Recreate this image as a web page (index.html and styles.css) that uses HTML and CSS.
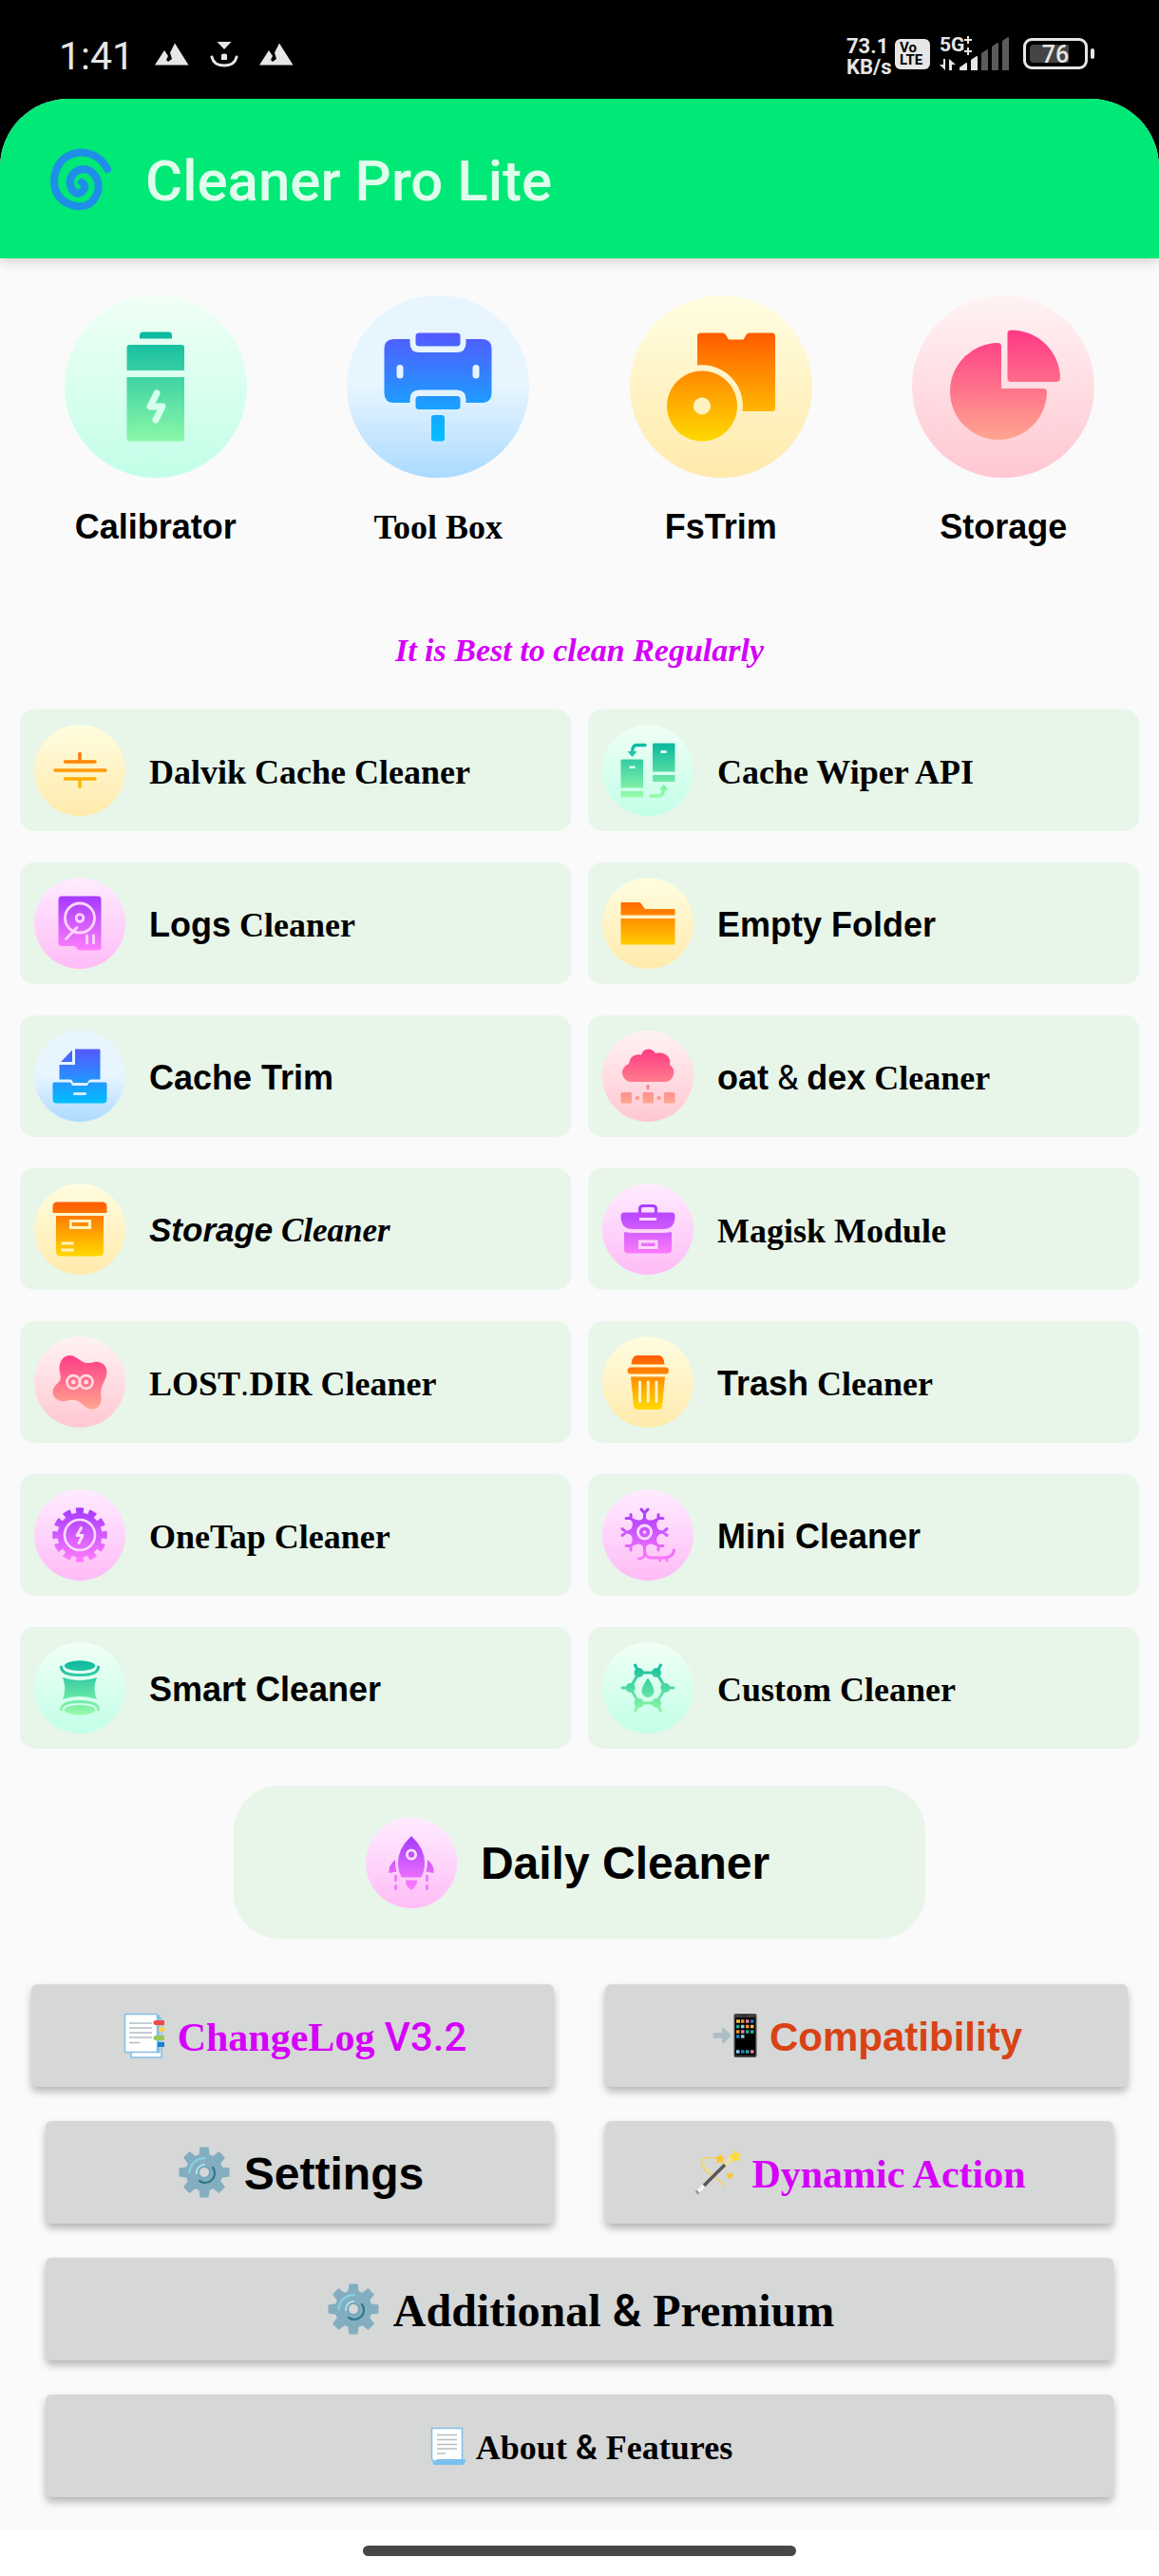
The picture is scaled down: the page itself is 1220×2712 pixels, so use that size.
FILE: index.html
```html
<!DOCTYPE html>
<html lang="en">
<head>
<meta charset="utf-8">
<meta name="viewport" content="width=device-width, initial-scale=1">
<title>Cleaner Pro Lite</title>
<link rel="stylesheet" href="styles.css">
</head>
<body>
<svg class="defs" width="0" height="0" aria-hidden="true">
  <defs>
    <linearGradient id="g-green" gradientUnits="userSpaceOnUse" x1="0" y1="19" x2="0" y2="77"><stop offset="0" stop-color="#08b8a0"/><stop offset="1" stop-color="#98fca8"/></linearGradient>
    <linearGradient id="g-blue" gradientUnits="userSpaceOnUse" x1="0" y1="19" x2="0" y2="77"><stop offset="0" stop-color="#5558ff"/><stop offset="1" stop-color="#00c0ff"/></linearGradient>
    <linearGradient id="g-gold" gradientUnits="userSpaceOnUse" x1="0" y1="19" x2="0" y2="77"><stop offset="0" stop-color="#ff5a00"/><stop offset="1" stop-color="#ffda00"/></linearGradient>
    <linearGradient id="g-rose" gradientUnits="userSpaceOnUse" x1="0" y1="19" x2="0" y2="77"><stop offset="0" stop-color="#fe3a86"/><stop offset="1" stop-color="#ffa78f"/></linearGradient>
    <linearGradient id="g-violet" gradientUnits="userSpaceOnUse" x1="0" y1="19" x2="0" y2="77"><stop offset="0" stop-color="#a438ff"/><stop offset="1" stop-color="#ff7efc"/></linearGradient>
    <linearGradient id="g-green-l" gradientUnits="userSpaceOnUse" x1="0" y1="38" x2="0" y2="154"><stop offset="0" stop-color="#08b8a0"/><stop offset="1" stop-color="#8cf8a8"/></linearGradient>
    <linearGradient id="g-blue-l" gradientUnits="userSpaceOnUse" x1="0" y1="38" x2="0" y2="154"><stop offset="0" stop-color="#5558ff"/><stop offset="1" stop-color="#00c0ff"/></linearGradient>
    <linearGradient id="g-gold-l" gradientUnits="userSpaceOnUse" x1="0" y1="38" x2="0" y2="154"><stop offset="0" stop-color="#ff5a00"/><stop offset="1" stop-color="#ffda00"/></linearGradient>
    <linearGradient id="g-rose-l" gradientUnits="userSpaceOnUse" x1="0" y1="38" x2="0" y2="154"><stop offset="0" stop-color="#fe3a86"/><stop offset="1" stop-color="#ffa78f"/></linearGradient>
    <symbol id="gear" viewBox="0 0 60 60">
      <g fill="#82aec0">
        <circle cx="30" cy="30" r="19.500"/>
        <path id="tooth" d="M24 14l1.500-10.500h9L36 14z"/>
        <use href="#tooth" transform="rotate(45 30 30)"/><use href="#tooth" transform="rotate(90 30 30)"/>
        <use href="#tooth" transform="rotate(135 30 30)"/><use href="#tooth" transform="rotate(180 30 30)"/>
        <use href="#tooth" transform="rotate(225 30 30)"/><use href="#tooth" transform="rotate(270 30 30)"/>
        <use href="#tooth" transform="rotate(315 30 30)"/>
      </g>
      <path d="M14.500 30A16 16 0 0 1 31 15" fill="none" stroke="#84cfe0" stroke-width="2.500" stroke-linecap="round"/>
      <path d="M22 31a8.500 8.500 0 0 1 8-9" fill="none" stroke="#b4e6f0" stroke-width="2" stroke-linecap="round"/>
      <path d="M39 25A10 10 0 0 1 25 39" fill="none" stroke="#2f7889" stroke-width="2.200" stroke-linecap="round"/>
      <circle cx="30" cy="30" r="7" fill="#74a7bb"/><circle cx="30" cy="30" r="5" fill="#d6d7d7"/>
    </symbol>
  </defs>
</svg>

<div class="status">
  <div class="status-left">
    <span class="clock">1:41</span>
    <svg width="36" height="24" viewBox="0 0 36 24"><path d="M0 23.500L10 8l4 6-2 4 2 2 4-3-2-6.500L21 .5l14.500 23z"/></svg>
    <svg width="30" height="28" viewBox="0 0 30 28"><path d="M7.500 1h15L15 9z"/><path d="M12 20v-5q0-1.500 3-1.500t3 1.500v5z"/><path d="M2 17q2 9 13 9t13-9" fill="none" stroke="#e6e6e6" stroke-width="3" stroke-linecap="round"/></svg>
    <svg width="36" height="24" viewBox="0 0 36 24"><path d="M0 23.500L10 8l4 6-2 4 2 2 4-3-2-6.500L21 .5l14.500 23z"/></svg>
  </div>
  <div class="status-right">
    <span class="speed"><span>73.1</span><span>KB/s</span></span>
    <span class="volte"><span>Vo</span><span>LTE</span></span>
    <span class="signal">
      <span class="net">5G</span>
      <svg width="74" height="36" viewBox="0 0 74 36">
        <path d="M30 0v8M26 4h8M30 12v8M26 16h8" stroke="#e6e6e6" stroke-width="2"/>
        <path d="M4 24h2v12L0 30h4zM10 36V24l7 6h-4v6z"/>
        <path d="M21 36v-3l7-5q1 0 1 1v7zM33 36V25l6-4q1 0 1 1v14z"/>
        <path d="M44 36V18l6-4q1 0 1 1v21zM55 36V11l6-4q1 0 1 1v28zM66 36V5l6-4q1 0 1 1v34z" fill="#5b5b5b"/>
      </svg>
    </span>
    <span class="battery"><span>76</span></span>
  </div>
</div>

<div class="frame">
<header class="appbar">
  <svg width="68" height="70" viewBox="0 0 68 70" aria-hidden="true"><path d="M35 36Q41 40 36 45.500Q30 50 25 44Q20 35 26 27Q34 19 44 24Q55 32 52 46Q46 63 29 61Q12 58 7 43Q3 25 15 12Q28 1 44 6Q56 10 62 22" fill="none" stroke="#1e8fe8" stroke-width="8" stroke-linecap="round" stroke-linejoin="round"/></svg>
  <h1>Cleaner Pro Lite</h1>
</header>

<main>
  <nav class="shortcuts">
    <button type="button" class="shortcut"><span class="badge large green"><svg viewBox="0 0 192 192" fill="url(#g-green-l)"><path d="M79 45.500V42q0-3.500 3.500-3.500h27q3.500 0 3.500 3.500v3.500zM65.500 79V55q0-3 3-3H123q3 0 3 3v24zM65.500 86H126v64q0 3.500-3 3.500H68.500q-3 0-3-3.500z"/><path d="M97 103l-7 14h13l-7 14" fill="none" stroke="#d5ffec" stroke-width="7" stroke-linecap="round" stroke-linejoin="round"/></svg></span><span class="caption sans">Calibrator</span></button>
    <button type="button" class="shortcut"><span class="badge large blue"><svg viewBox="0 0 192 192" fill="url(#g-blue-l)"><path d="M50 46h16.500v4q0 10 10 10h39q10 0 10-10v-4H142q10.500 0 10.500 10.500V103q0 10-10.500 10h-16.500v-3.500q0-10-10-10h-39q-10 0-10 10v3.500H50q-10.500 0-10.500-10V56.500Q39.500 46 50 46z"/><rect x="72.500" y="39.500" width="47" height="14" rx="3.500"/><rect x="72.500" y="106" width="47" height="14" rx="3.500"/><rect x="89" y="126" width="14" height="27.500" rx="3"/><g fill="#e7f5ff"><rect x="52.500" y="73" width="7" height="14.500" rx="3.500"/><rect x="132.500" y="73" width="7" height="14.500" rx="3.500"/></g></svg></span><span class="caption serif">Tool Box</span></button>
    <button type="button" class="shortcut"><span class="badge large gold"><svg viewBox="0 0 192 192" fill="url(#g-gold-l)"><path d="M71 43q0-3.500 3.500-3.500H98q2 0 3 2l3 5h15.500l3-5q1-2 3-2h24q3.500 0 3.500 3.500v75.500q0 3.500-3.500 3.500h-31A43 43 0 0 0 71 73.500z"/><path fill-rule="evenodd" d="M76 79.500a37 37 0 1 0 .1 0zM76 107.500a9 9 0 1 1-.1 0z"/></svg></span><span class="caption sans">FsTrim</span></button>
    <button type="button" class="shortcut"><span class="badge large rose"><svg viewBox="0 0 192 192" fill="url(#g-rose-l)"><path d="M94 54q0-4-4-4A51 51 0 1 0 142 102q0-4-4-4H94z"/><path d="M100.500 40q0-3.500 4-3.500A51.500 51.500 0 0 1 156 87q0 4-4 4h-48q-3.500 0-3.500-4z"/></svg></span><span class="caption sans">Storage</span></button>
  </nav>

  <p class="tagline">It is Best to clean Regularly</p>

  <section class="cards">
    <button type="button" class="card"><span class="badge gold"><svg viewBox="0 0 96 96" fill="none" stroke="url(#g-gold)" stroke-width="3.500" stroke-linecap="round"><path d="M48 30.500V39M32.500 39.010L64 39M22 48.010L75 48M32.500 57.010L64 57M48 57v8.500"/></svg></span><span class="label serif">Dalvik Cache Cleaner</span></button>
    <button type="button" class="card"><span class="badge green"><svg viewBox="0 0 96 96" fill="url(#g-green)"><path fill-rule="evenodd" d="M20.500 36.500H42q1 0 1 1v29H19.500v-29q0-1 1-1zM28.500 43.500V46h6v-2.500zM54 19.500h21.500q1 0 1 1v29H53v-29q0-1 1-1zM61.500 27v3h6v-3z"/><path d="M19.500 70H43v5.500q0 1-1 1H20.500q-1 0-1-1zM53 53h23.500v6q0 1-1 1H54q-1 0-1-1zM26.500 28h10l-5 6zM60 68.500h9.500L64.500 63z"/><path d="M45 21.500H36q-4.500 0-4.500 8M51 75h8.500q5 0 5-8" fill="none" stroke="url(#g-green)" stroke-width="3.500" stroke-linecap="round"/></svg></span><span class="label serif">Cache Wiper API</span></button>

    <button type="button" class="card"><span class="badge violet"><svg viewBox="0 0 96 96"><path fill="url(#g-violet)" d="M29 19.500h38q3.500 0 3.500 3.500v50q0 3.500-3.500 3.500H47l-4.500-4.500H29q-3.500 0-3.500-3.500V23q0-3.500 3.500-3.500z"/><g fill="none" stroke="#ffd6fb" stroke-width="2.800" stroke-linecap="round"><circle cx="48" cy="42.500" r="15.500"/><circle cx="48" cy="42.500" r="3.800"/><path d="M45 52.500L33.500 64.500M55.500 61v8M62.500 61v8"/></g></svg></span><span class="label"><span class="sans">Logs</span> <span class="serif">Cleaner</span></span></button>
    <button type="button" class="card"><span class="badge gold"><svg viewBox="0 0 96 96" fill="url(#g-gold)"><path d="M20.500 26H39q1 0 1.500 1l4.500 6h30.500q1 0 1 1v5.500h-57V27q0-1 1-1zM19.500 43h57v26.500q0 1-1 1h-55q-1 0-1-1z"/></svg></span><span class="label sans">Empty Folder</span></button>

    <button type="button" class="card"><span class="badge blue"><svg viewBox="0 0 96 96" fill="url(#g-blue)"><path d="M40 20.500V33H28zM43 19.500h25.500q1 0 1 1v31H59q-1.500 0-3 3.500H41q-1-3.500-3-3.500H26.500V36H43zM21 54.500h16q2 0 3 3.500h16q1-3.500 3-3.500h16q1.500 0 1.500 1.500v16q0 4.500-4 4.500h-49q-4 0-4-4.500V56q0-1.500 1.500-1.500z"/><path d="M42.500 66.500h11" stroke="#d4ecff" stroke-width="3.200" stroke-linecap="round"/></svg></span><span class="label sans">Cache Trim</span></button>
    <button type="button" class="card"><span class="badge rose"><svg viewBox="0 0 96 96" fill="url(#g-rose)"><path d="M29 54A9.800 9.800 0 0 1 28 35Q29 26.500 36 25.500 39 25 41 25.500 43 19.500 48.500 19.500 53 19.500 56 24 63 22 68 26 72.500 30 71 36A10 10 0 0 1 67 54zM46.500 57h3v5h-3z"/><rect x="19.500" y="65" width="11.500" height="11.500" rx="1.500"/><rect x="42.500" y="65" width="11.500" height="11.500" rx="1.500"/><rect x="65" y="65" width="11.500" height="11.500" rx="1.500"/><circle cx="36.800" cy="71" r="2.300"/><circle cx="59.500" cy="71" r="2.300"/></svg></span><span class="label"><span class="sans">oat</span> <span class="roboto">&amp;</span> <span class="sans">dex</span> <span class="serif">Cleaner</span></span></button>

    <button type="button" class="card"><span class="badge gold"><svg viewBox="0 0 96 96"><path fill="url(#g-gold)" d="M24.500 19.500h47q5 0 5 5V30q0 1-1 1h-55q-1 0-1-1v-5.500q0-5 5-5zM23 34h50v37.500q0 5-5 5H28q-5 0-5-5z"/><g fill="none" stroke="#fff3bf" stroke-width="3"><path d="M38.500 39.500h20v7h-20zM28.500 63h13M28.500 70h13"/></g></svg></span><span class="label italic"><span class="sans">Storage</span> <span class="serif">Cleaner</span></span></button>
    <button type="button" class="card"><span class="badge violet"><svg viewBox="0 0 96 96"><path fill="url(#g-violet)" d="M23 30.500h50q3.500 0 3.500 4 0 14-13.500 13.500H33Q19.500 48.500 19.500 34.500q0-4 3.500-4zM23 51q5 1 10 1h30q5 0 10-1v18.500q0 4-4 4H27q-4 0-4-4z"/><path d="M39.500 31v-4q0-3.500 3.500-3.500h10q3.500 0 3.500 3.500v4" fill="none" stroke="url(#g-violet)" stroke-width="3.200"/><path d="M39 37.500h18M39.500 61h17.500v6.500H39.500z" fill="none" stroke="#ffd6fb" stroke-width="3"/></svg></span><span class="label serif">Magisk Module</span></button>

    <button type="button" class="card"><span class="badge rose"><svg viewBox="0 0 96 96"><path fill="url(#g-rose)" d="M27 38C25 30 29 20 37 20C45 20 49 28 56 28C62 28 63 26 68 27C76 29 78 36 75.500 43C72 51 69 56 70.500 64C71 70 68 76.500 61 76.500C53 76.500 50 68 43 67C37 66 34 69 28 68C20 66 17 58 22 52C27 47 29 46 27 38z"/><g fill="none" stroke="#ffdce0" stroke-width="2.600"><circle cx="41.300" cy="48" r="6.900"/><circle cx="54.700" cy="48" r="6.900"/></g><g fill="#ffdce0"><circle cx="41.300" cy="48" r="2.400"/><circle cx="54.700" cy="48" r="2.400"/></g></svg></span><span class="label"><span class="serif">LOST</span><span class="roboto">.</span><span class="serif">DIR Cleaner</span></span></button>
    <button type="button" class="card"><span class="badge gold"><svg viewBox="0 0 96 96"><path fill="url(#g-gold)" d="M30.500 29.500Q31 20 37 20h22q6 0 6.500 9.500zM30 42.500h36L63 73q-.5 4-4.500 4h-21q-4 0-4.500-4z"/><rect x="26.500" y="32.500" width="43.500" height="7" rx="3.500" fill="url(#g-gold)"/><path d="M39.500 48v20.500M48.200 48v20.500M57 48v20.500" stroke="#fff3bf" stroke-width="3" stroke-linecap="round"/></svg></span><span class="label"><span class="sans">Trash</span> <span class="serif">Cleaner</span></span></button>

    <button type="button" class="card"><span class="badge violet"><svg viewBox="0 0 96 96"><circle cx="48" cy="48" r="23.500" fill="url(#g-violet)"/><circle cx="48" cy="48" r="25.500" pathLength="24" fill="none" stroke="url(#g-violet)" stroke-width="6.500" stroke-dasharray="1.200 .8" stroke-dashoffset=".6"/><circle cx="48" cy="48" r="16" fill="none" stroke="#ffdcfc" stroke-width="2.600"/><path d="M49.500 40.500l-4.500 8h6l-4 8" fill="none" stroke="#ffdcfc" stroke-width="2.800" stroke-linecap="round" stroke-linejoin="round"/></svg></span><span class="label serif">OneTap Cleaner</span></button>
    <button type="button" class="card"><span class="badge violet"><svg viewBox="0 0 96 96"><path d="M44.500 27q2 6 6 5.500 4 0 6-2l2 2q-2 3-1 6.500 1 4 5 4.500v3q-4 1-5 4.500-1 4 1 6.500l-2 2q-3-2-6-2-4 0-6 7-2-7-6-7-3 0-6 2l-2-2q2-3 1-6.500-1-4-5-4.500v-3q4-1 5-4.500 1-4-1-6.500l2-2q3 2 6 2 4 0 6-5.500z" fill="url(#g-violet)"/><g fill="none" stroke="url(#g-violet)" stroke-width="3" stroke-linecap="round" stroke-linejoin="round"><path d="M44.500 33v-8M41 21l3.500 4 3.500-4M44.500 57v12q-1 4-6 4M33 45h-8M21 41.500l4 3.500-4 3.500M56 45h8M68 41.500L64 45l4 3.500M36 36.500l-6-6M30 26.500v4h-5M53 36.500l6-6M59 26.500v4h5M36 53.500l-6 6M30 64v-4.500h-5M53 53.500l6 6M59 64v-4.500h5M44.500 65q0 7 8 7h11q11 0 12-8M61 72v3M68 72v3"/></g><circle cx="44.500" cy="45" r="7" fill="none" stroke="#ffdcfc" stroke-width="2.800"/><circle cx="44.500" cy="45" r="1.800" fill="#ffdcfc"/></svg></span><span class="label sans">Mini Cleaner</span></button>

    <button type="button" class="card"><span class="badge green"><svg viewBox="0 0 96 96" fill="url(#g-green)"><ellipse cx="48" cy="24.700" rx="16.200" ry="5.400"/><ellipse cx="48" cy="71.300" rx="16.200" ry="5.400"/><path d="M30 37Q48 43.500 66 37Q61 48.500 66 60Q48 54 30 60Q34.500 48.500 30 37z"/><path d="M28.500 26q0 8.500 19.500 8.500T67.500 26M28.500 71q0-8.500 19.500-8.500T67.500 71" fill="none" stroke="url(#g-green)" stroke-width="3" stroke-linecap="round"/></svg></span><span class="label sans">Smart Cleaner</span></button>
    <button type="button" class="card"><span class="badge green"><svg viewBox="0 0 96 96" fill="url(#g-green)"><g fill="none" stroke="url(#g-green)" stroke-width="3" stroke-linecap="round"><path d="M38.500 32L57 32.010 66.500 48 57 64.010 38.500 64 29.500 48zM38.500 32l-4-8M57 32l4.500-8M29.500 48.010L21 48M66.500 48.010L75 48M38.500 64l-4 8M57 64l4.500 8"/></g><circle cx="38.500" cy="32" r="5"/><circle cx="57" cy="32" r="5"/><circle cx="29.700" cy="48" r="5"/><circle cx="66.300" cy="48" r="5"/><circle cx="38.500" cy="64" r="5"/><circle cx="57" cy="64" r="5"/><path d="M48 37.500Q54.500 47 54.500 51.500a6.500 6.500 0 0 1-13 0Q41.500 47 48 37.500z"/></svg></span><span class="label serif">Custom Cleaner</span></button>
  </section>

  <div class="daily-row">
    <button type="button" class="daily"><span class="badge violet"><svg viewBox="0 0 96 96" fill="url(#g-violet)"><path d="M48 20Q62 33 62 48q0 8-3 14-.5 1.500-2 1.500H39q-1.500 0-2-1.500-3-6-3-14 0-15 14-28zM31 45q-.500 6 1.500 12.500L24.500 59q-1-8 6.500-14zM65 45q.5 6-1.500 12.500l8 1.500q1-8-6.500-14zM43 66.500h10q1 0 1 1 0 5.500-6 9.500-6-4-6-9.500 0-1 1-1z"/><path d="M31.500 62v4.500M31.500 72.500v3M64.500 62v4.500M64.500 72.500v3" stroke="#ef7bfb" stroke-width="3" stroke-linecap="round"/><circle cx="48" cy="39.500" r="4.600" fill="none" stroke="#ffe0fd" stroke-width="2.800"/></svg></span><span class="daily-label sans">Daily Cleaner</span></button>
  </div>

  <section class="actions">
    <div class="pair wide">
      <button type="button" class="action mid magenta">
        <svg width="52" height="52" viewBox="0 0 52 52" aria-hidden="true"><path d="M13 8h32v41H13z" fill="#fff" stroke="#82bfe6" stroke-width="1.500"/><path d="M42 4.500v40" stroke="#82bfe6" stroke-width="3"/><path d="M6.500 3.500h34v40h-34z" fill="#fff" stroke="#82bfe6" stroke-width="1.500"/><path d="M11 13h24M11 18h24M11 23h24M11 28h24M11 33.500h11" stroke="#b0bec5" stroke-width="1.400"/><path d="M38 10h10v5H38l-2-2.500z" fill="#ee4b42"/><path d="M42 17h6v5h-6z" fill="#ffd04e"/><path d="M38 26h10v5H38l-2-2.500z" fill="#97c95b"/><path d="M41 33h7v5h-7z" fill="#1681d8"/></svg>
        <span><span class="serif">ChangeLog</span> <span class="medium">V3.2</span></span>
      </button>
      <button type="button" class="action mid orange">
        <svg width="52" height="52" viewBox="0 0 52 52" aria-hidden="true"><path d="M4 23h8v-4q0-2 2-1l8 8-8 8q-2 1-2-1v-4H4q-1.500 0-1.500-3T4 23z" fill="#adbec6"/><rect x="24.500" y="3" width="24" height="46" rx="2" fill="#424242"/><path d="M26 7h21v40H26z" fill="#000"/><path d="M32 5h8" stroke="#212121"/><g stroke-width="3.500" fill="none"><path d="M27 11h4" stroke="#ffb74d"/><path d="M32 11h3.500" stroke="#f59518"/><path d="M37 11h3.500" stroke="#f27ba5"/><path d="M42 11h3.500M27 27h3.500M32 43h3.500" stroke="#1b84c6"/><path d="M27 16.500h3.500M37 22h3.500M42 22h3.500M37 43h3.500" stroke="#25ad9a"/><path d="M32 16.500h3.500M32 27h3.500M27 43h3.500" stroke="#82d0f4"/><path d="M37 16.500h3.500M27 22h3.500" stroke="#f59518"/><path d="M42 16.500h3.500" stroke="#ffb74d"/><path d="M32 22h3.500M42 43h3.500" stroke="#f27ba5"/></g></svg>
        <span class="sans">Compatibility</span>
      </button>
    </div>
    <div class="pair">
      <button type="button" class="action big">
        <svg width="60" height="60" aria-hidden="true"><use href="#gear"/></svg>
        <span class="sans">Settings</span>
      </button>
      <button type="button" class="action mid magenta">
        <svg width="52" height="52" viewBox="0 0 52 52" aria-hidden="true"><path d="M25 11Q9 9 9 15q1 9 11 14Q33 37 34 41" fill="none" stroke="#f2d463" stroke-width="1.500"/><path d="M12 13q-3 6 8 13" fill="none" stroke="#eddc94" stroke-width="1.500"/><path d="M5 47L36 16" stroke="#585858" stroke-width="3.500"/><path d="M5 47l7-7" stroke="#f5f5f5" stroke-width="4"/><path d="M4 48l2-2" stroke="#9a9a9a" stroke-width="4"/><path d="M34 18l8-8" stroke="#f4dd9e" stroke-width="4"/><path d="M45 2l2 4.500 5-.5-3.500 4 2 4.500-5-1.500-4 3 0-5L37.500 8l5-1z" fill="#fddc3a"/><path d="M29 6l1.500 3.500 3.500.5-2.500 3 .500 4-3.500-2-3.500 1.500 1-4-2.500-2.500 4-.5zM40 25l1 3 3 .5-2.500 2 .5 3-2.500-1.500-3 1 1-3-2-2.500h3.500z" fill="#fbc62d"/></svg>
        <span class="serif">Dynamic Action</span>
      </button>
    </div>
    <div class="single">
      <button type="button" class="action big">
        <svg width="60" height="60" aria-hidden="true"><use href="#gear"/></svg>
        <span><span class="serif">Additional</span> <span class="medium">&amp;</span> <span class="serif">Premium</span></span>
      </button>
      <button type="button" class="action small">
        <svg width="44" height="44" viewBox="0 0 44 44" aria-hidden="true"><path d="M5.500 3.500h32V38H10q-4.500 0-4.500-3z" fill="#fff" stroke="#82bfe6" stroke-width="1.500"/><path d="M11 10.500h21M11 15.500h21M11 20.500h21M11 25h21M11 30h9" stroke="#b0bec5" stroke-width="1.500"/><path d="M6 38q3 3 5-2h30q-.5 6-4 6H9q-2.500 0-3-4z" fill="#78c0ee"/></svg>
        <span><span class="serif">About</span> <span class="medium">&amp;</span> <span class="serif">Features</span></span>
      </button>
    </div>
  </section>
</main>
</div>
<div class="gesture"><span></span></div>
</body>
</html>
```
FILE: styles.css
```css
* { box-sizing: border-box; }

body {
  margin: 0;
  min-height: 100vh;
  display: flex;
  flex-direction: column;
  background: #000;
  color: #000;
  font-family: Roboto, sans-serif;
}

button {
  margin: 0;
  padding: 0;
  border: 0;
  background: none;
  color: inherit;
  font: inherit;
  cursor: pointer;
}

svg { display: block; flex: none; }
.defs { position: absolute; }

.sans { font-family: "Liberation Sans", Arial, sans-serif; font-weight: 700; }
.serif { font-family: "Liberation Serif", "Times New Roman", serif; font-weight: 700; }
.roboto { font-family: Roboto, sans-serif; font-weight: 400; }
.medium { font-family: Roboto, sans-serif; font-weight: 500; }

/* Status bar */
.status {
  display: flex;
  justify-content: space-between;
  height: 104px;
  padding: 38px 75px 0 62px;
  color: #e6e6e6;
}
.status svg { fill: #e6e6e6; }
.status-left { display: flex; align-items: center; gap: 22px; height: 38px; }
.clock { padding-top: 3px; font-size: 41px; line-height: 40px; }
.status-right { display: flex; align-items: flex-start; height: 40px; }
.speed {
  display: flex;
  flex-direction: column;
  width: 51px;
  font-size: 22px;
  font-weight: 700;
  line-height: 22px;
}
.volte {
  display: flex;
  flex-direction: column;
  justify-content: center;
  align-items: flex-start;
  width: 37px;
  height: 32px;
  margin-top: 3px;
  padding-left: 5px;
  border-radius: 6px;
  background: #e6e6e6;
  color: #000;
  font-size: 15px;
  font-weight: 700;
  line-height: 13px;
}
.signal { position: relative; width: 74px; margin: 0 14px 0 10px; }
.net { position: absolute; left: 0; top: -1px; font-size: 21px; font-weight: 700; line-height: 20px; }
.battery {
  position: relative;
  display: flex;
  align-items: center;
  justify-content: center;
  width: 68px;
  height: 33px;
  margin-top: 2px;
  border: 3px solid #e6e6e6;
  border-radius: 9px;
  font-size: 25px;
  font-weight: 500;
  line-height: 26px;
}
.battery span { position: relative; padding-top: 3px; }
.battery::before {
  content: "";
  position: absolute;
  left: 4px;
  top: 4px;
  width: 41px;
  height: 19px;
  border-radius: 4px 0 0 4px;
  background: #444;
}
.battery::after {
  content: "";
  position: absolute;
  right: -10px;
  top: 8px;
  width: 4px;
  height: 11px;
  border-radius: 2px;
  background: #e6e6e6;
}

/* App */
.frame {
  flex: 1;
  display: flex;
  flex-direction: column;
  overflow: hidden;
  border-radius: 72px 72px 0 0;
  background: #fafafa;
}
.appbar {
  position: relative;
  display: flex;
  align-items: center;
  gap: 34px;
  height: 168px;
  padding: 5px 51px 0;
  background: #00e876;
  box-shadow: 0 2px 14px rgba(0, 0, 0, .2);
}
.appbar h1 {
  margin: 0;
  color: #dffdec;
  font-size: 60px;
  font-weight: 500;
  line-height: 72px;
}
main { flex: 1; padding: 39px 0 35px; }

.shortcuts { display: grid; grid-template-columns: repeat(4, 1fr); padding: 0 15px; }
.shortcut { display: flex; flex-direction: column; align-items: center; gap: 32px; }
.caption { font-size: 36px; line-height: 40px; }

.badge { flex: none; width: 96px; height: 96px; border-radius: 50%; }
.badge svg { width: 100%; height: 100%; }
.badge.large { width: 192px; height: 192px; }
.badge.green { background: linear-gradient(#f0fff6, #c2ffe8); }
.badge.blue { background: linear-gradient(#e7f5ff 50%, #abdaff); }
.badge.gold { background: linear-gradient(#fffde0, #ffeaac); }
.badge.rose { background: linear-gradient(#fff3f4, #ffc7d2); }
.badge.violet { background: linear-gradient(#ffecff, #febcf6); }

.tagline {
  margin: 90px 0 42px;
  color: #d500f9;
  font: italic 700 34px/40px "Liberation Serif", "Times New Roman", serif;
  text-align: center;
}

.cards {
  display: grid;
  grid-template-columns: 1fr 1fr;
  gap: 33px 18px;
  padding: 0 21px;
}
.card {
  display: flex;
  align-items: center;
  gap: 25px;
  height: 128px;
  padding: 0 15px;
  border-radius: 15px;
  background: #e8f5e9;
  text-align: left;
}
.label { padding-top: 3px; font-size: 36px; line-height: 40px; white-space: nowrap; }
.label.italic { font-size: 35px; font-style: italic; }

.daily-row { margin: 39px 246px 48px; }
.daily {
  display: flex;
  align-items: center;
  justify-content: center;
  width: 100%;
  height: 161px;
  border-radius: 48px;
  background: #e8f5e9;
}
.daily-label { padding: 3px 25px 0; font-size: 48px; line-height: 56px; }

.actions { display: grid; gap: 36px; }
.pair { display: grid; grid-template-columns: 1fr 1fr; gap: 54px; padding: 0 48px; }
.pair.wide { padding: 0 33px; }
.single { display: grid; gap: 36px; padding: 0 48px; }
.action {
  display: flex;
  align-items: center;
  justify-content: center;
  height: 108px;
  border-radius: 6px;
  background: #d6d7d7;
  box-shadow: 0 5px 8px rgba(0, 0, 0, .28);
  line-height: 56px;
}
.action > span { padding-top: 3px; }
.action.small { gap: 8px; font-size: 36px; }
.action.mid { gap: 10px; font-size: 42px; }
.action.big { gap: 12px; font-size: 48px; }
.magenta { color: #d500f9; }
.orange { color: #d84315; }

.gesture {
  display: flex;
  justify-content: center;
  height: 48px;
  padding-top: 16px;
  background: #fff;
}
.gesture span { width: 456px; height: 11px; border-radius: 6px; background: #474747; }
```
